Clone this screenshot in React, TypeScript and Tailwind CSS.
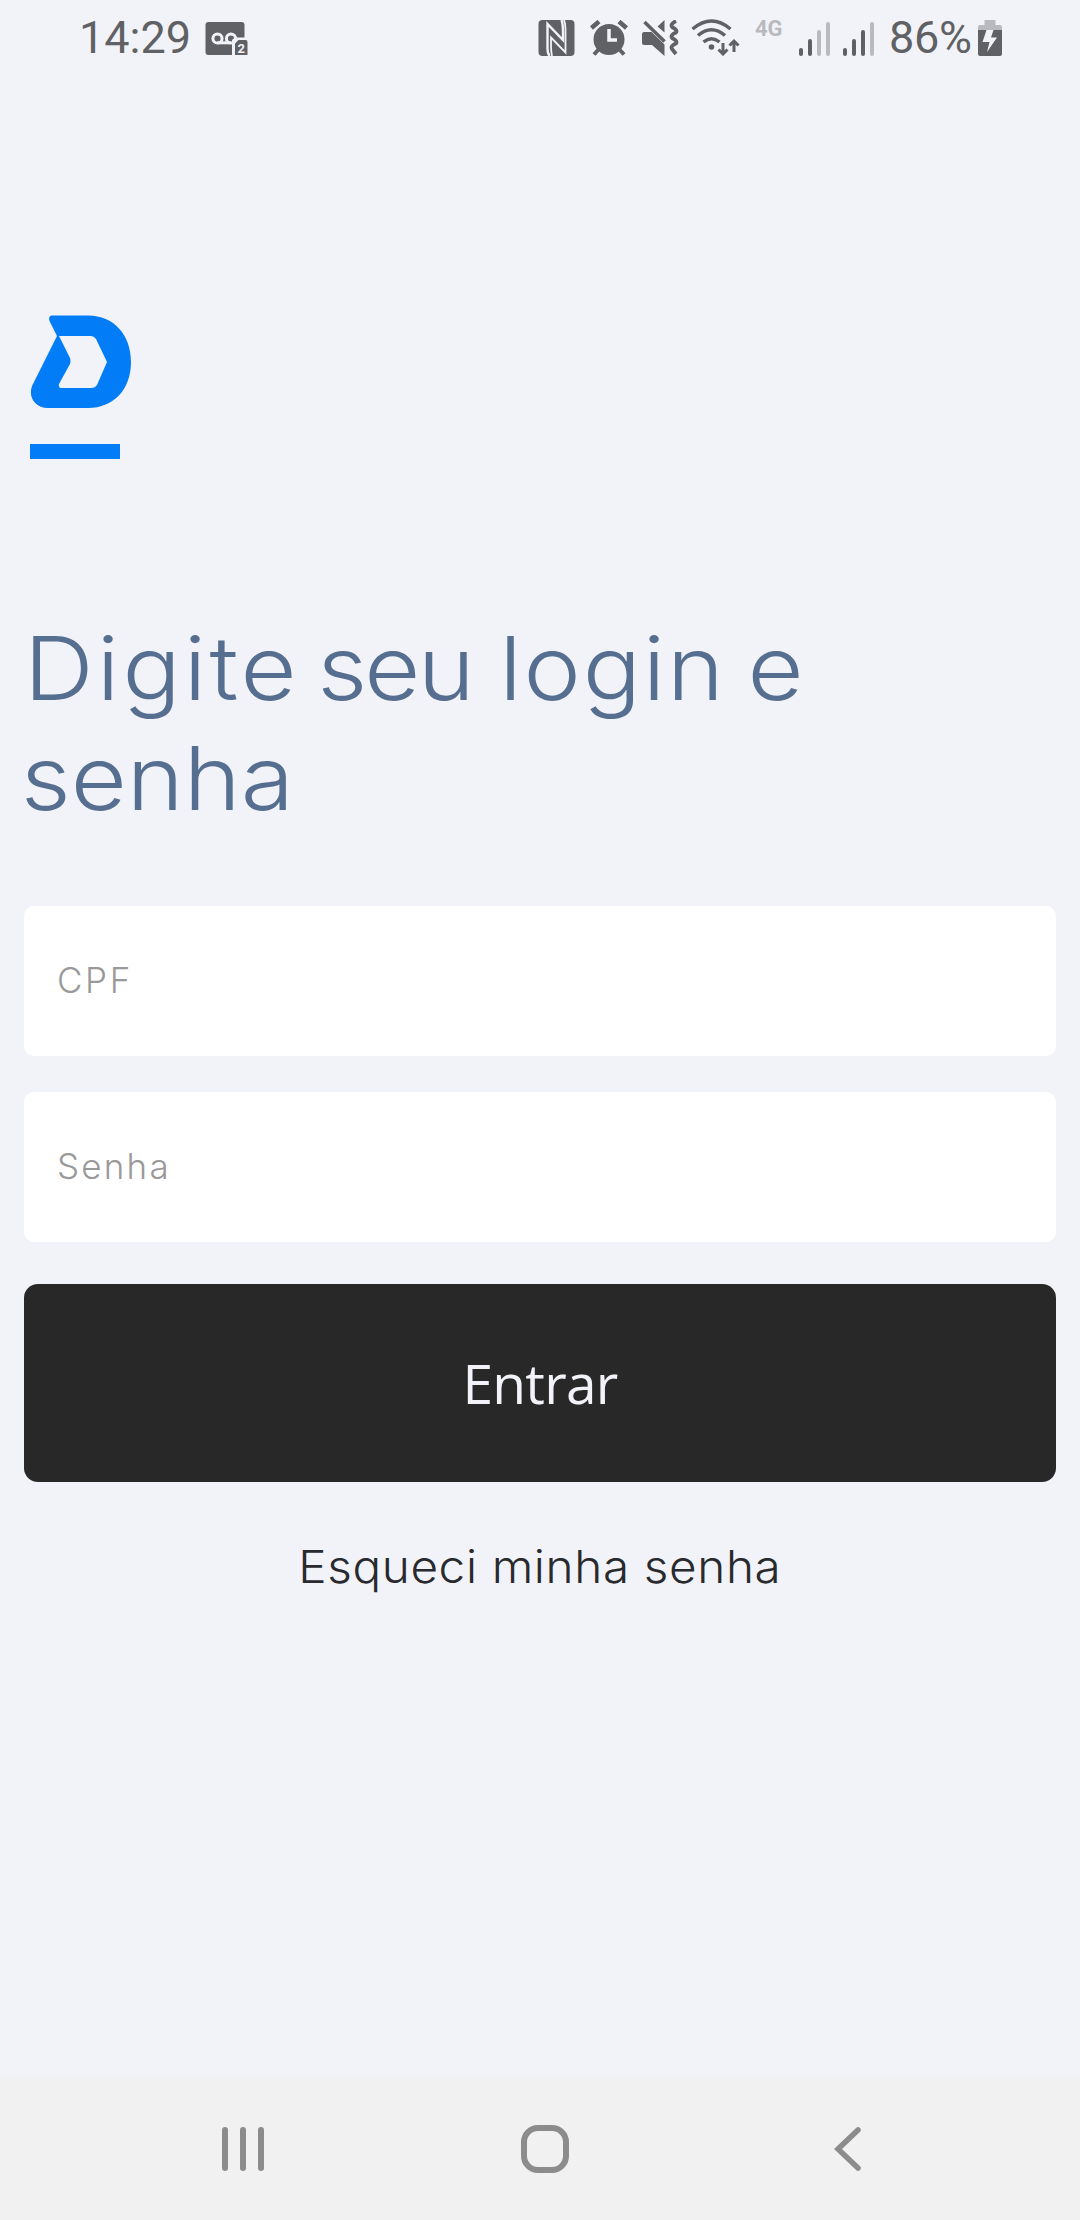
function VoicemailIcon() {
  return (
    <svg className="ml-[17px] h-[36px] w-[43px]" viewBox="0 0 43 36" fill="none">
      <rect x="0.5" y="2" width="39" height="33" rx="3" fill="#606164" />
      <circle cx="12.5" cy="18.5" r="4.6" stroke="#f2f3f9" strokeWidth="3" />
      <circle cx="26" cy="18.5" r="4.6" stroke="#f2f3f9" strokeWidth="3" />
      <path d="M12.5 22.8H26" stroke="#f2f3f9" strokeWidth="3" />
      <path d="M27 36V20L30 17.5H43V36z" fill="#f2f3f9" />
      <path d="M30 35V23.5L33.5 20H40.5Q42.5 20 42.5 22V35z" fill="#606164" />
      <text x="36.3" y="32.5" textAnchor="middle" fontSize="13" fontWeight="700" fontFamily="Roboto, sans-serif" fill="#f2f3f9">2</text>
    </svg>
  );
}

function NfcIcon() {
  return (
    <svg className="h-[36px] w-[37px]" viewBox="0 0 37 36" fill="none">
      <rect x="0.5" y="0" width="36" height="36" rx="4" fill="#606164" />
      <path d="M11.5 36Q9.5 33 9.5 29V4L25 20V12Q25 4 23.5 0" stroke="#f2f3f9" strokeWidth="2.4" />
      <path d="M26 0Q27.5 4 27.5 9V32.5L13 17.5V26Q13 32 14 36" stroke="#f2f3f9" strokeWidth="1.8" />
    </svg>
  );
}

function AlarmIcon() {
  return (
    <svg className="ml-[15px] h-[36px] w-[38px]" viewBox="0 0 38 36" fill="none">
      <circle cx="19" cy="19.5" r="15.5" fill="#606164" />
      <path d="M1.5 8L9 1.5M36.5 8L29 1.5" stroke="#606164" strokeWidth="4.5" />
      <path d="M9 29L4 34.5M29 29L34 34.5" stroke="#606164" strokeWidth="4" />
      <path d="M19 9V20H27" stroke="#f2f3f9" strokeWidth="3.5" />
    </svg>
  );
}

function MuteVibrateIcon() {
  return (
    <svg className="ml-[14px] h-[36px] w-[37px]" viewBox="0 0 37 36" fill="none">
      <path d="M0 14Q0 12 2 12H9.5L22.5 24.5V36L10 25H2Q0 25 0 23z" fill="#606164" />
      <path d="M22.5 0V12.5L15.5 6.5z" fill="#606164" />
      <path d="M2.5 2L22.5 21.5" stroke="#606164" strokeWidth="3.5" />
      <path d="M34 1Q28 4 30 7Q36 10 34 12.5Q28 15 30 18Q36 21 34 23.5Q28 26 30 29L34 34" stroke="#606164" strokeWidth="3.7" strokeLinejoin="round" />
    </svg>
  );
}

function WifiIcon() {
  return (
    <svg className="ml-[12px] h-[37px] w-[49px]" viewBox="0 0 49 37" fill="none">
      <path d="M1.5 10Q20.5 -6 39.5 10" stroke="#606164" strokeWidth="3.5" />
      <path d="M7 16.5Q20.5 5 34 16.5" stroke="#606164" strokeWidth="3.5" />
      <path d="M12.5 23Q20.5 16.5 28.5 23" stroke="#606164" strokeWidth="3.5" />
      <circle cx="20.5" cy="28" r="2.8" fill="#606164" />
      <path d="M32 24V34M27.5 30.5L32 35L36.5 30.5M43 33V23M38.5 26.5L43 22L47.5 26.5" stroke="#606164" strokeWidth="3" />
    </svg>
  );
}

function SignalIcon({ level }: { level: number }) {
  const tops = [28, 19, 10, 2];
  return (
    <svg className="h-[36px] w-[32px]" viewBox="0 0 32 36" fill="none">
      {tops.map((top, i) => (
        <rect key={top} x={i * 9} y={top} width="4" height={36 - top} rx="2" fill={i < level ? '#606164' : '#b9babe'} />
      ))}
    </svg>
  );
}

function BatteryIcon() {
  return (
    <svg className="ml-[5px] h-[36px] w-[24px]" viewBox="0 0 24 36">
      <path d="M6.5 0H17.5V5H22Q24 5 24 7V11H0V7Q0 5 2 5H6.5z" fill="#b9babe" />
      <path d="M0 10H24V34Q24 36 22 36H2Q0 36 0 34z" fill="#606164" />
      <path d="M8.5 10H15.5L13 17.5H19L9 32L11.5 22H4.5z" fill="#f2f3f9" />
    </svg>
  );
}

function StatusBar() {
  return (
    <header className="flex h-[75px] items-center pl-[79px] font-[Roboto,sans-serif] text-[45px] leading-none text-[#606164]">
      <span className="w-[109px]">14:29</span>
      <VoicemailIcon />
      <div className="ml-[290px] flex items-center">
        <NfcIcon />
        <AlarmIcon />
        <MuteVibrateIcon />
        <WifiIcon />
        <span className="ml-[15px] w-[44px] -translate-y-[9px] text-[22px] font-bold text-[#b9babe]">4G</span>
        <SignalIcon level={2} />
        <div className="ml-[12px]">
          <SignalIcon level={3} />
        </div>
      </div>
      <span className="ml-[14px] w-[84px] tracking-[-0.3px]">86%</span>
      <BatteryIcon />
    </header>
  );
}

function Logo() {
  return (
    <svg className="ml-[6px] h-[94px] w-[102px]" viewBox="0 0 102 94">
      <path
        fill="#027df7"
        fillRule="evenodd"
        d="M22 .5H58C84 .5 101 20 101 47S84 93 58 93H18C5 93 -2 82 2 71L27 21L19.5 6Q18 1 22 .5zM29 21L40 43Q41 46 40 49L29 69Q28 73 32 73H61Q65 73 67 70L77 47L66 24Q64 21 61 21z"
      />
    </svg>
  );
}

function NavigationBar() {
  return (
    <nav className="flex h-[143px] items-center bg-[#f1f1f1] pl-[222px]">
      <div className="flex gap-[12px]">
        <span className="h-[44px] w-[6px] rounded-full bg-[#8c8c8c]" />
        <span className="h-[44px] w-[6px] rounded-full bg-[#8c8c8c]" />
        <span className="h-[44px] w-[6px] rounded-full bg-[#8c8c8c]" />
      </div>
      <span className="ml-[257px] size-[48px] rounded-[17px] border-6 border-[#8c8c8c]" />
      <svg className="ml-[264px] h-[46px] w-[30px]" viewBox="0 0 30 46" fill="none">
        <path d="M25 4L5 23L25 42" stroke="#8c8c8c" strokeWidth="5.5" strokeLinecap="round" />
      </svg>
    </nav>
  );
}

export default function App() {
  return (
    <div className="flex h-[2220px] w-[1080px] flex-col overflow-hidden bg-[#f2f3f9] font-[Inter,sans-serif]">
      <StatusBar />

      <main className="flex flex-1 flex-col px-6 pt-[240px]">
        <Logo />
        <div className="mt-[35px] ml-[6px] h-[15px] w-[90px] bg-[#027df7]" />

        <h1 className="mt-[154px] origin-left scale-x-[1.1] text-[88px] leading-[110px] font-[340] text-[#566f90]">
          <span className="mr-[-9px] tracking-[2.8px]">Digite</span> <span className="tracking-[-2.5px]">seu</span>{' '}
          <span className="mr-[-5px] tracking-[1.6px]">login</span> e
          <br />
          <span className="-ml-[3px]">senha</span>
        </h1>

        <form className="mt-[73px] flex flex-col">
          <input
            type="text"
            placeholder="CPF"
            className="h-[150px] rounded-[10px] bg-white px-[33px] pb-[3px] text-[35px] font-light tracking-[2.6px] outline-none placeholder:text-[#999999]"
          />
          <input
            type="password"
            placeholder="Senha"
            className="mt-[36px] h-[150px] rounded-[10px] bg-white px-[33px] pb-[3px] text-[35px] font-light tracking-[2.2px] outline-none placeholder:text-[#999999]"
          />
          <button
            type="button"
            className="mt-[42px] h-[198px] rounded-[14px] bg-[#282828] pt-px font-['Open_Sans',sans-serif] text-[55px] tracking-[-0.7px] text-[#f2f3f9]"
          >
            Entrar
          </button>
        </form>

        <a href="#" className="mt-[55px] scale-x-[1.07] self-center text-[44.5px] leading-[60px] font-[340] tracking-[0.6px] text-[#282a2e]">
          Esqueci minha senha
        </a>
      </main>

      <NavigationBar />
    </div>
  );
}
